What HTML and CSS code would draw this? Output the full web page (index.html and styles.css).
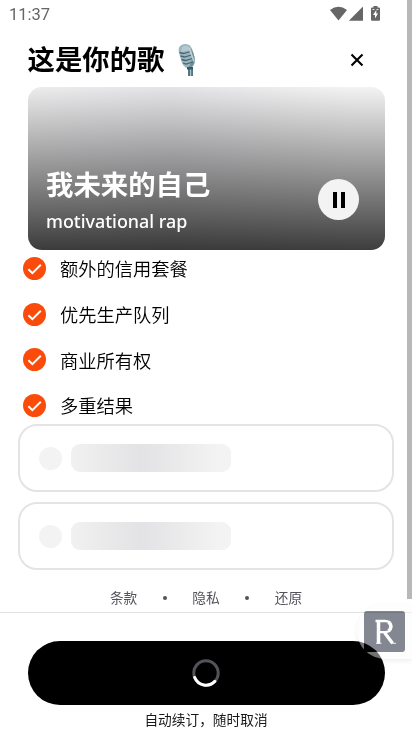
FILE: index.html
```html
<!DOCTYPE html>
<html lang="zh-CN">
<head>
<meta charset="utf-8">
<title>这是你的歌</title>
<link rel="stylesheet" href="styles.css">
</head>
<body>
<main class="screen">
  <div class="status">
    <span class="time">11:37</span>
    <svg class="status-icons" width="52" height="16" viewBox="0 0 52 16" fill="#666">
      <path d="M0 4Q8.500-2.400 17 4L8.500 14.500Z"/>
      <path d="M33 .5V14.800H18.800Z"/>
      <path d="M43.500 0h4v1.500H49q1 0 1 1V13.800q0 1-1 1h-7q-1 0-1-1V2.500q0-1 1-1h1.500Z"/>
      <path d="M46.300 4L43 9h2v3.500L48 7.500h-1.700Z" fill="#fff"/>
      <path d="M42.500 3.500h2M46.500 3.500h2" stroke="#fff" stroke-width=".8"/>
    </svg>
  </div>
  <header class="header">
    <h1>这是你的歌</h1>
    <svg class="mic" width="20" height="34" viewBox="0 0 20 34">
      <path d="M10 23h5v9h-5Z" fill="#507986"/>
      <path d="M12 24h1.200v8H12Z" fill="#a5bdc4"/>
      <path d="M1 9C-.5 3 3 .3 7 .1c5-.2 6.700 3.500 8 7.900l1.500 5c1.300 4.500 0 7-1.500 9l-1.500 2h-4C5 23 3.500 18 2.500 14Z" fill="#9db4bd"/>
      <path d="M13 4c3 5 5.500 13 2 17.500l-2 2.500h-3c4-5 5-12 3-20Z" fill="#6f919c"/>
      <path d="M4 3q4-3 7 0l1 3-9 2Z" fill="#b6c8cf"/>
      <g fill="none" stroke="#426774" stroke-width="1.300"><path d="M1.500 8.500l4 1 7-2M2.500 12l4 1 7-2M3.500 15.500l4 1 7-2M5 19l3 1 7-2"/></g>
      <path d="M11 3.500l5 14" stroke="#c3d1d6" stroke-width="1.500"/>
      <path d="M9 23h6v2.500H9Z" fill="#345966"/>
    </svg>
    <svg class="close" width="14" height="14" viewBox="0 0 14 14"><path d="M1.500 1.500l11 11M12.500 1.500l-11 11" stroke="#000" stroke-width="2.100"/></svg>
  </header>
  <section class="song">
    <div>
      <h2>我未来的自己</h2>
      <p>motivational rap</p>
    </div>
    <div class="pause"><i></i><i></i></div>
  </section>
  <ul class="features">
    <li><svg class="check" viewBox="0 0 23 23"><circle cx="11.500" cy="11.500" r="11.500"/><path d="M5.400 12.200l4 4 8.400-8.500"/></svg>额外的信用套餐</li>
    <li><svg class="check" viewBox="0 0 23 23"><circle cx="11.500" cy="11.500" r="11.500"/><path d="M5.400 12.200l4 4 8.400-8.500"/></svg>优先生产队列</li>
    <li><svg class="check" viewBox="0 0 23 23"><circle cx="11.500" cy="11.500" r="11.500"/><path d="M5.400 12.200l4 4 8.400-8.500"/></svg>商业所有权</li>
    <li><svg class="check" viewBox="0 0 23 23"><circle cx="11.500" cy="11.500" r="11.500"/><path d="M5.400 12.200l4 4 8.400-8.500"/></svg>多重结果</li>
  </ul>
  <div class="plans">
    <div class="plan"><span class="radio"></span><span class="bar"></span></div>
    <div class="plan"><span class="radio"></span><span class="bar"></span></div>
  </div>
  <nav class="links"><span>条款</span><i></i><span>隐私</span><i></i><span>还原</span></nav>
  <footer class="footer">
    <div class="button">
      <svg width="28" height="28" viewBox="0 0 28 28" fill="none" stroke-width="3"><circle cx="14" cy="14" r="12.200" stroke="#52525b"/><path d="M2.700 18.500A12.200 12.200 0 0 0 22.800 22.400" stroke="#fff" stroke-linecap="round"/></svg>
    </div>
    <p>自动续订，随时取消</p>
  </footer>
</main>
<div class="scrollbar"></div>
<div class="halo"></div>
<div class="badge"></div>
<svg class="letter" width="41" height="41" viewBox="0 0 41 41" fill="none" stroke="#fff"><path d="M14.500 9.200v23.300" stroke-width="3.500"/><path d="M11.500 10h9.500c8.500 0 8.500 11.200 0 11.200h-6" stroke-width="2.300"/><path d="M24.300 11c3.300 2 3.300 7 0 9M20.500 21.500l8 10.800" stroke-width="3.300"/><path d="M12 32.300h5.500M27.500 32.300h4.500" stroke-width=".9"/></svg>
</body>
</html>
```

FILE: styles.css
```css
* { box-sizing: border-box; }
body, h1, h2, p, ul { margin: 0; padding: 0; }
body {
  height: 732px;
  position: relative;
  overflow: hidden;
  background: #fff;
  color: #000;
  font-family: "Noto Sans CJK SC", sans-serif;
}
.screen { height: 732px; display: flex; flex-direction: column; }
.screen > * { flex-shrink: 0; }
.status {
  height: 32px;
  padding: 6px 30px 0 9px;
  display: flex;
  justify-content: space-between;
  align-items: flex-start;
}
.time { font: 400 16.500px/17px Roboto, sans-serif; color: #666; }
.header {
  height: 55px;
  padding: 0 48px 0 27.500px;
  display: flex;
  align-items: center;
}
h1 { font-size: 27.400px; line-height: 40px; font-weight: 700; white-space: nowrap; padding-bottom: 3px; }
.mic { margin: 2px 0 0 14px; }
.close { margin: 0 0 0 auto; }
.song {
  height: 163px;
  margin: 0 27.500px;
  padding: 0 25px 14px 18.500px;
  border-radius: 14px;
  display: flex;
  justify-content: space-between;
  align-items: flex-end;
  background:
    linear-gradient(rgba(0,0,0,0), rgba(0,0,0,.75)),
    linear-gradient(90deg, #ededee, #e4e4e7 40%, #f3f3f3 90%);
  color: #fff;
}
h2 { font-size: 27.400px; line-height: 40px; font-weight: 700; }
.song p { font: 500 17.900px/28px "Noto Sans", sans-serif; margin: 4px 0 1px; }
.pause {
  width: 41px;
  height: 41px;
  margin: 0 .5px 16px 0;
  border-radius: 50%;
  background: #f3f3f3;
  display: flex;
  gap: 4px;
  align-items: center;
  justify-content: center;
}
.pause i { width: 4px; height: 16px; background: #000; }
.features { list-style: none; padding: 0 23px; margin-top: -4.500px; }
.features li {
  height: 45.700px;
  display: flex;
  align-items: center;
  gap: 14px;
  font-size: 18.280px;
  font-weight: 350;
}
.check { width: 23px; height: 23px; fill: #fa4b0a; }
.check path { fill: none; stroke: #fff; stroke-width: 2; }
.plans { margin: -4.300px 18.300px 0; display: grid; gap: 10px; }
.plan {
  height: 68px;
  border: 2.400px solid #e4e4e7;
  border-radius: 19px;
  padding-left: 18.500px;
  display: flex;
  align-items: center;
  gap: 9px;
}
.radio { width: 23px; height: 23px; margin-top: 1px; border-radius: 50%; background: #f3f3f3; }
.bar {
  width: 160px;
  height: 27.500px;
  border-radius: 9px;
  background: linear-gradient(90deg, #f1f1f1, #e3e3e5 43%, #e6e6e8 55%, #f3f3f3 92%);
}
.links {
  height: 42px;
  padding-top: 13px;
  display: flex;
  justify-content: center;
  gap: 25.500px;
  font-size: 13.700px;
  line-height: 28px;
  color: #52525b;
}
.links i { width: 4px; height: 4px; margin-top: 13px; border-radius: 50%; background: #52525b; }
.footer { flex: 1; border-top: 1px solid #e2e2e5; padding: 28px 27.500px 0; }
.button {
  height: 64px;
  border-radius: 32px;
  background: #000;
  display: flex;
  align-items: center;
  justify-content: center;
}
.footer p { text-align: center; font-size: 13.700px; line-height: 28px; color: #18181b; }
.scrollbar { position: absolute; left: 407px; top: 0; width: 5px; height: 599px; background: #b8b8b8; }
.halo {
  position: absolute;
  left: 357px;
  top: 603px;
  width: 55px;
  height: 56px;
  border-radius: 28px 0 0 28px;
  box-shadow: 0 2px 5px rgba(0,0,0,.07);
}
.halo::before {
  content: "";
  display: block;
  height: 100%;
  border-radius: inherit;
  background: rgba(250,250,250,.45);
  clip-path: polygon(evenodd, 0 0, 55px 0, 55px 56px, 0 56px, 0 0, 7px 8px, 48px 8px, 48px 49px, 7px 49px, 7px 8px);
}
.badge {
  position: absolute;
  left: 364px;
  top: 611px;
  width: 41px;
  height: 41px;
  border-radius: 3px;
  background: #838791;
  mix-blend-mode: multiply;
}
.letter { position: absolute; left: 364px; top: 611px; }
```
